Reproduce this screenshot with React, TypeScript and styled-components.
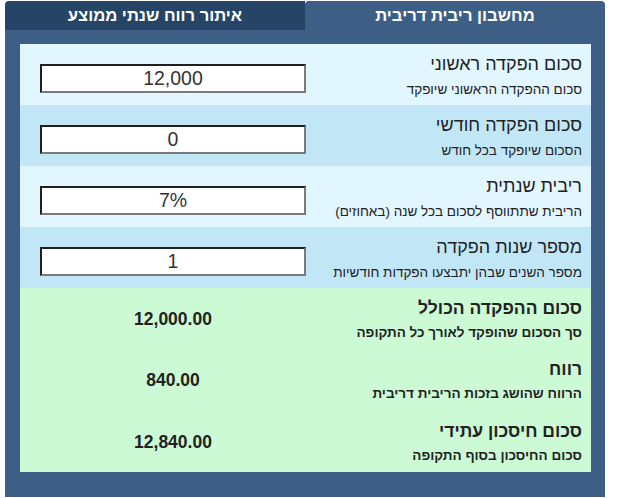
import styled, { createGlobalStyle } from 'styled-components';

const GlobalStyle = createGlobalStyle`
  html, body {
    margin: 0;
    padding: 0;
    background: #ffffff;
  }
  body {
    font-family: "Liberation Sans", Arial, sans-serif;
  }
`;

type InputRowProps = {
  title: string;
  hint: string;
  value: string;
  shade: 'light' | 'dark';
};

type ResultRowProps = {
  title: string;
  hint: string;
  value: string;
};

const inputs: InputRowProps[] = [
  { title: 'סכום הפקדה ראשוני', hint: 'סכום ההפקדה הראשוני שיופקד', value: '12,000', shade: 'light' },
  { title: 'סכום הפקדה חודשי', hint: 'הסכום שיופקד בכל חודש', value: '0', shade: 'dark' },
  { title: 'ריבית שנתית', hint: 'הריבית שתתווסף לסכום בכל שנה (באחוזים)', value: '7%', shade: 'light' },
  { title: 'מספר שנות הפקדה', hint: 'מספר השנים שבהן יתבצעו הפקדות חודשיות', value: '1', shade: 'dark' },
];

const results: ResultRowProps[] = [
  { title: 'סכום ההפקדה הכולל', hint: 'סך הסכום שהופקד לאורך כל התקופה', value: '12,000.00' },
  { title: 'רווח', hint: 'הרווח שהושג בזכות הריבית דריבית', value: '840.00' },
  { title: 'סכום חיסכון עתידי', hint: 'סכום החיסכון בסוף התקופה', value: '12,840.00' },
];

const InputRow = ({ title, hint, value, shade }: InputRowProps) => (
  <Row $shade={shade}>
    <Label>
      <Title>{title}</Title>
      <Hint>{hint}</Hint>
    </Label>
    <Field defaultValue={value} />
  </Row>
);

const ResultRow = ({ title, hint, value }: ResultRowProps) => (
  <Result>
    <Label>
      <ResultTitle>{title}</ResultTitle>
      <ResultHint>{hint}</ResultHint>
    </Label>
    <Amount>{value}</Amount>
  </Result>
);

export default function App() {
  return (
    <>
      <GlobalStyle />
      <Page>
        <Widget>
          <Tabs>
            <Tab $active>מחשבון ריבית דריבית</Tab>
            <Tab>איתור רווח שנתי ממוצע</Tab>
          </Tabs>
          <Panel>
            {inputs.map((row) => (
              <InputRow key={row.title} {...row} />
            ))}
            <Results>
              {results.map((row) => (
                <ResultRow key={row.title} {...row} />
              ))}
            </Results>
          </Panel>
        </Widget>
      </Page>
    </>
  );
}

const Page = styled.div`
  padding: 1px 0 0 5px;
`;

const Widget = styled.div`
  width: 600px;
  direction: rtl;
`;

const Tabs = styled.div`
  display: flex;
  height: 29px;
`;

const Tab = styled.div<{ $active?: boolean }>`
  flex: 1;
  display: flex;
  align-items: center;
  justify-content: center;
  background: ${(p) => (p.$active ? '#3d5f85' : '#264566')};
  color: #ffffff;
  font-size: 16.6px;
  font-weight: bold;
  border-radius: ${(p) => (p.$active ? '4px 4px 0 0' : '4px 0 0 0')};
  cursor: pointer;
`;

const Panel = styled.div`
  background: #3d5f85;
  padding: 14px 14px 25px 15px;
`;

const Row = styled.div<{ $shade: 'light' | 'dark' }>`
  display: flex;
  justify-content: space-between;
  align-items: flex-start;
  height: 61px;
  background: ${(p) => (p.$shade === 'light' ? '#e1f6fe' : '#c1e7f7')};
`;

const Label = styled.div`
  padding: 10px 9px 0 0;
  text-align: right;
`;

const Title = styled.div`
  font-size: 18px;
  line-height: 20px;
  color: #222222;
`;

const Hint = styled.div`
  margin-top: 8px;
  font-size: 13.5px;
  line-height: 16px;
  color: #222222;
`;

const Field = styled.input`
  box-sizing: border-box;
  width: 266px;
  height: 29px;
  margin: 20px 0 0 20px;
  padding: 0;
  background: #ffffff;
  border-style: solid;
  border-width: 2px;
  border-color: #1f1f1f #7a7a7a #7a7a7a #1f1f1f;
  font-family: "Liberation Sans", Arial, sans-serif;
  font-size: 19.5px;
  color: #333333;
  text-align: center;
  direction: ltr;
  outline: none;
`;

const Results = styled.div`
  background: #ccfad5;
`;

const Result = styled.div`
  display: flex;
  justify-content: space-between;
  align-items: flex-start;
  height: 61.3px;
`;

const ResultTitle = styled.div`
  font-size: 17.5px;
  line-height: 20px;
  font-weight: bold;
  color: #222222;
`;

const ResultHint = styled.div`
  margin-top: 7px;
  font-size: 13.5px;
  line-height: 16px;
  font-weight: bold;
  color: #222222;
`;

const Amount = styled.div`
  width: 266px;
  margin: 21px 0 0 20px;
  text-align: center;
  font-size: 17.5px;
  line-height: 20px;
  font-weight: bold;
  color: #222222;
  direction: ltr;
`;
